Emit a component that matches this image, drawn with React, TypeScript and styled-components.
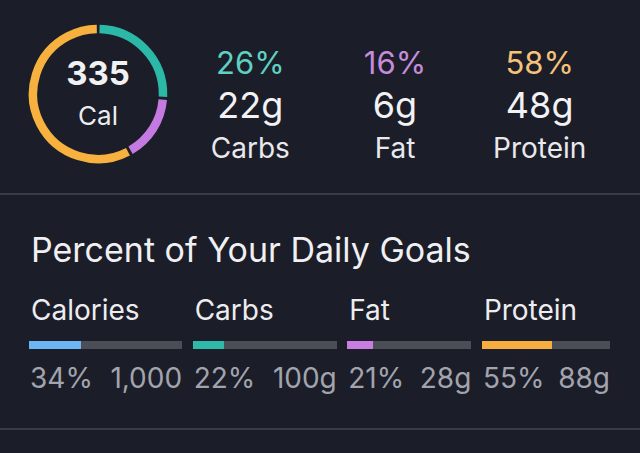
import styled, { createGlobalStyle } from 'styled-components';

const GlobalStyle = createGlobalStyle`
  html, body {
    margin: 0;
    padding: 0;
    background: #1b1d28;
  }
  body {
    font-family: Inter, "Noto Sans", sans-serif;
    color: #eeeef1;
  }
`;

// --- data ---
const ringSegments = [
  { color: '#2bb8a6', from: 0, to: 0.26 },
  { color: '#c47ae0', from: 0.26, to: 0.42 },
  { color: '#f6b13f', from: 0.42, to: 1 },
];

const macros = [
  { pct: '26%', grams: '22g', name: 'Carbs', color: '#5fd1c2' },
  { pct: '16%', grams: '6g', name: 'Fat', color: '#c68cdb' },
  { pct: '58%', grams: '48g', name: 'Protein', color: '#f7c27a' },
];

const goals = [
  { label: 'Calories', pct: 34, goal: '1,000', color: '#6cb6f6', weight: 153 },
  { label: 'Carbs', pct: 22, goal: '100g', color: '#2fb9a8', weight: 144 },
  { label: 'Fat', pct: 21, goal: '28g', color: '#c77ee0', weight: 124 },
  { label: 'Protein', pct: 55, goal: '88g', color: '#f7ae3f', weight: 128 },
];

// --- styled ---
const Page = styled.div`
  background: #1b1d28;
  min-height: 453px;
`;

const Summary = styled.section`
  display: flex;
  align-items: flex-start;
  gap: 10px;
  padding: 24px 28px 24px 28px;
  border-bottom: 2px solid #393b47;
`;

const Ring = styled.div`
  display: grid;
  width: 140px;
  height: 140px;
  flex-shrink: 0;

  & > * {
    grid-area: 1 / 1;
  }
`;

const RingCenter = styled.div`
  display: flex;
  flex-direction: column;
  align-items: center;
  justify-content: center;
`;

const Calories = styled.div`
  font-size: 33px;
  font-weight: 700;
  line-height: 36px;
  color: #f1f1f3;
`;

const CalUnit = styled.div`
  font-size: 26px;
  line-height: 34px;
  margin-top: 8px;
  color: #ececef;
`;

const Stats = styled.div`
  flex: 1;
  display: grid;
  grid-template-columns: repeat(3, 1fr);
  margin-top: 19px;
`;

const Stat = styled.div`
  display: flex;
  flex-direction: column;
  align-items: center;
`;

const StatPct = styled.div<{ $color: string }>`
  font-size: 31px;
  line-height: 40px;
  color: ${p => p.$color};
`;

const StatGrams = styled.div`
  font-size: 36px;
  line-height: 44px;
  color: #f2f2f4;
`;

const StatName = styled.div`
  font-size: 28px;
  line-height: 42px;
  color: #e9e9ec;
`;

const Goals = styled.section`
  padding: 35px 30px 33px 29px;
  border-bottom: 2px solid #393b47;
`;

const GoalsTitle = styled.h2`
  margin: 0 0 23px 2px;
  font-size: 34px;
  font-weight: 400;
  line-height: 40px;
  color: #f0f0f2;
`;

const GoalGrid = styled.div<{ $cols: string }>`
  display: grid;
  grid-template-columns: ${p => p.$cols};
  column-gap: 10.5px;
`;

const GoalCol = styled.div`
  display: flex;
  flex-direction: column;
  min-width: 0;
`;

const GoalLabel = styled.div`
  font-size: 28px;
  line-height: 34px;
  color: #ededf0;
  padding-left: 2px;
`;

const Track = styled.div`
  margin-top: 14px;
  height: 8px;
  background: #4b4d57;
`;

const Fill = styled.div<{ $color: string }>`
  height: 100%;
  background: ${p => p.$color};
`;

const GoalNumbers = styled.div`
  display: flex;
  justify-content: space-between;
  margin-top: 12px;
  font-size: 28px;
  line-height: 34px;
  color: #a2a4ad;
  white-space: nowrap;
  padding-left: 1px;
`;

function CalorieRing() {
  const r = 65;
  const c = 2 * Math.PI * r;
  const gap = 3;
  return (
    <Ring>
      <svg width="140" height="140" viewBox="0 0 140 140">
        {ringSegments.map((s, i) => {
          const len = (s.to - s.from) * c - gap;
          return (
            <circle
              key={i}
              cx="70"
              cy="70"
              r={r}
              fill="none"
              stroke={s.color}
              strokeWidth="8.5"
              strokeDasharray={`${len} ${c}`}
              transform={`rotate(${-90 + s.from * 360 + (gap / 2 / c) * 360} 70 70)`}
            />
          );
        })}
      </svg>
      <RingCenter>
        <Calories>335</Calories>
        <CalUnit>Cal</CalUnit>
      </RingCenter>
    </Ring>
  );
}

export default function App() {
  return (
    <Page>
      <GlobalStyle />
      <Summary>
        <CalorieRing />
        <Stats>
          {macros.map(m => (
            <Stat key={m.name}>
              <StatPct $color={m.color}>{m.pct}</StatPct>
              <StatGrams>{m.grams}</StatGrams>
              <StatName>{m.name}</StatName>
            </Stat>
          ))}
        </Stats>
      </Summary>
      <Goals>
        <GoalsTitle>Percent of Your Daily Goals</GoalsTitle>
        <GoalGrid $cols={goals.map(g => `${g.weight}fr`).join(' ')}>
          {goals.map(g => (
            <GoalCol key={g.label}>
              <GoalLabel>{g.label}</GoalLabel>
              <Track>
                <Fill $color={g.color} style={{ width: `${g.pct}%` }} />
              </Track>
              <GoalNumbers>
                <span>{g.pct}%</span>
                <span>{g.goal}</span>
              </GoalNumbers>
            </GoalCol>
          ))}
        </GoalGrid>
      </Goals>
    </Page>
  );
}
